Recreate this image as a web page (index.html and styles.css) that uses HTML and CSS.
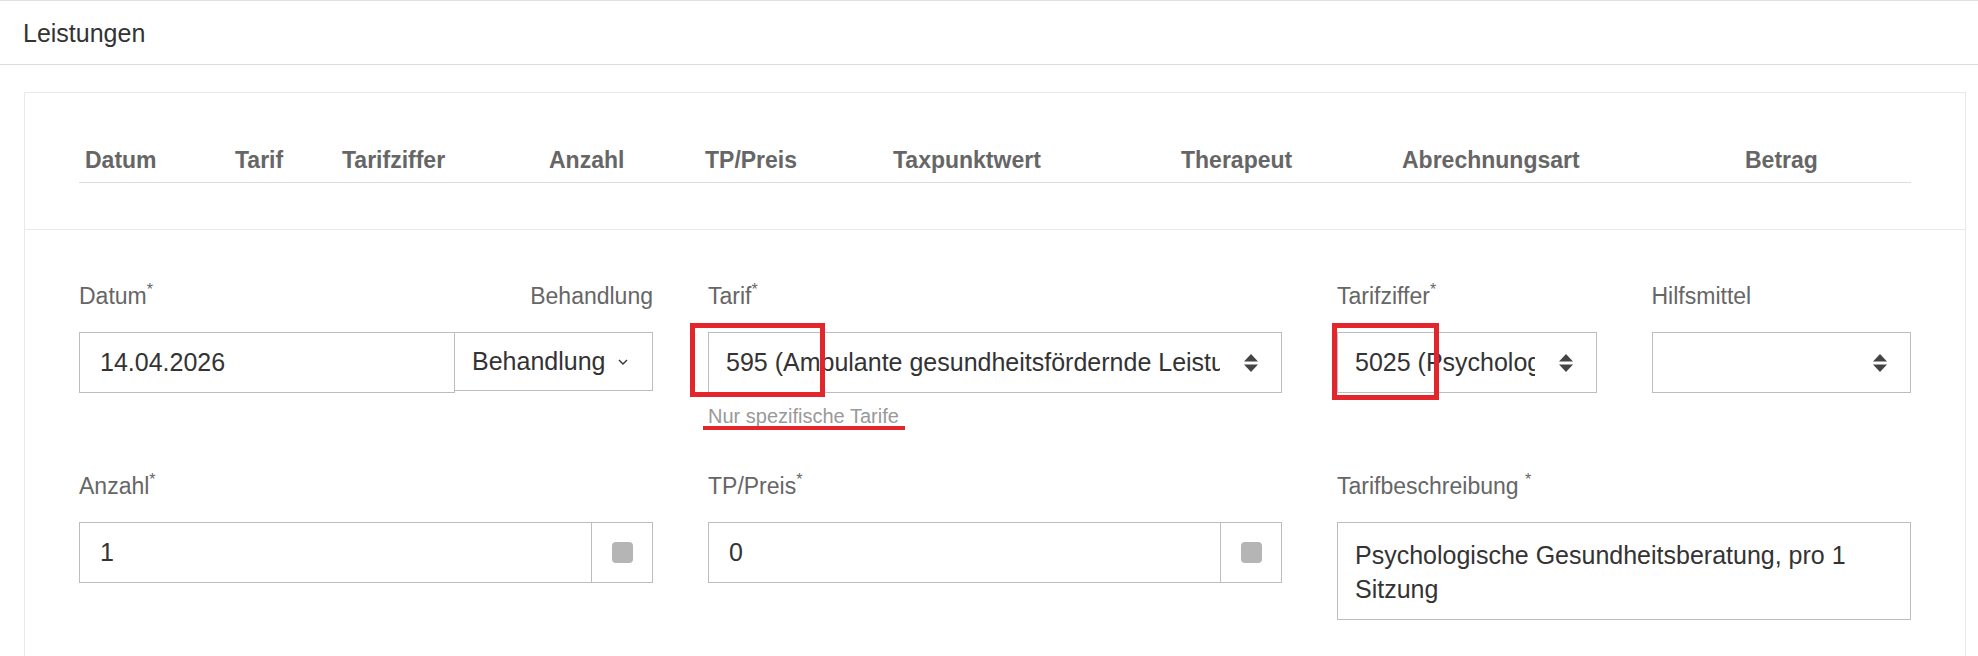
FILE: index.html
```html
<!DOCTYPE html>
<html lang="de">
<head>
  <meta charset="UTF-8" />
  <title>Leistungen</title>
  <link rel="stylesheet" href="styles.css">
</head>
<body>
  <div class="panel-heading">Leistungen</div>

  <div class="panel-body">
    <div class="card">
      <div class="list">
        <div class="table-head">
          <div class="th">Datum</div>
          <div class="th">Tarif</div>
          <div class="th">Tarifziffer</div>
          <div class="th">Anzahl</div>
          <div class="th">TP/Preis</div>
          <div class="th">Taxpunktwert</div>
          <div class="th">Therapeut</div>
          <div class="th">Abrechnungsart</div>
          <div class="th">Betrag</div>
        </div>
      </div>

      <form class="entry">
        <!-- Zeile 1 -->
        <div class="field">
          <div class="label-row">
            <label class="lbl" for="datum">Datum<sup>*</sup></label>
            <label class="lbl">Behandlung</label>
          </div>
          <div class="input-group">
            <input class="control" type="text" id="datum" value="14.04.2026" />
            <button type="button" class="dropdown">
              <span>Behandlung</span>
              <svg class="chev" viewBox="0 0 10 6" width="10" height="6"><path d="M1 1 L5 5 L9 1" fill="none" stroke="#333" stroke-width="1.4"/></svg>
            </button>
          </div>
        </div>

        <div class="field">
          <label class="lbl">Tarif<sup>*</sup></label>
          <div class="select">
            <span class="value">595 (Ambulante gesundheitsfördernde Leistungen)</span>
            <svg class="sort" viewBox="0 0 14 18" width="14" height="18"><path d="M7 0 L14 7.5 H0 Z M0 10.5 H14 L7 18 Z" fill="#444"/></svg>
            <span class="mark mark-tarif"></span>
          </div>
          <div class="hint">Nur spezifische Tarife<span class="underline"></span></div>
        </div>

        <div class="split">
          <div class="field">
            <label class="lbl">Tarifziffer<sup>*</sup></label>
            <div class="select">
              <span class="value">5025 (Psychologische Gesundheitsberatung, pro 1 Sitzung)</span>
              <svg class="sort" viewBox="0 0 14 18" width="14" height="18"><path d="M7 0 L14 7.5 H0 Z M0 10.5 H14 L7 18 Z" fill="#444"/></svg>
              <span class="mark mark-ziffer"></span>
            </div>
          </div>
          <div class="field">
            <label class="lbl">Hilfsmittel</label>
            <div class="select">
              <span class="value"></span>
              <svg class="sort" viewBox="0 0 14 18" width="14" height="18"><path d="M7 0 L14 7.5 H0 Z M0 10.5 H14 L7 18 Z" fill="#444"/></svg>
            </div>
          </div>
        </div>

        <!-- Zeile 2 -->
        <div class="field">
          <label class="lbl" for="anzahl">Anzahl<sup>*</sup></label>
          <div class="input-group">
            <input class="control flat" type="text" id="anzahl" value="1" />
            <span class="addon"><span class="check"></span></span>
          </div>
        </div>

        <div class="field">
          <label class="lbl" for="preis">TP/Preis<sup>*</sup></label>
          <div class="input-group">
            <input class="control flat" type="text" id="preis" value="0" />
            <span class="addon"><span class="check"></span></span>
          </div>
        </div>

        <div class="field">
          <label class="lbl" for="beschreibung">Tarifbeschreibung <sup>*</sup></label>
          <textarea class="control area" id="beschreibung">Psychologische Gesundheitsberatung, pro 1 Sitzung</textarea>
        </div>
      </form>
    </div>
  </div>
</body>
</html>
```

FILE: styles.css
```css
* {
  box-sizing: border-box;
}
html, body {
  overflow: hidden;
}
body {
  margin: 0;
  font-family: "Liberation Sans", Arial, sans-serif;
  color: #333;
  background-color: #fff;
}

.panel-heading {
  height: 65px;
  padding: 2px 0 0 23px;
  border-top: 1px solid #e2e2e2;
  border-bottom: 1px solid #dcdcdc;
  font-size: 25px;
  line-height: 61px;
  color: #333;
}
.panel-body {
  padding: 27px 12px 0 24px;
}
.card {
  border: 1px solid #e9e9e9;
}

.list {
  padding: 43px 54px 46px;
  border-bottom: 1px solid #e9e9e9;
}
.table-head {
  display: grid;
  grid-template-columns: 150px 107px 207px 156px 188px 288px 221px 343px 172px;
  border-bottom: 1px solid #ddd;
}
.th {
  padding: 8px 6px 5px;
  font-size: 23px;
  font-weight: bold;
  line-height: 33px;
  color: #666;
  white-space: nowrap;
}

.entry {
  display: grid;
  grid-template-columns: repeat(3, 1fr);
  column-gap: 55px;
  row-gap: 40px;
  align-items: start;
  padding: 50px 54px;
}
.split {
  display: grid;
  grid-template-columns: 1fr 1fr;
  column-gap: 55px;
}
.field {
  min-width: 0;
}
.label-row {
  display: flex;
  justify-content: space-between;
}
.lbl {
  display: block;
  margin-bottom: 19px;
  font-size: 23px;
  line-height: 33px;
  color: #666;
}
.lbl sup {
  font-size: 16px;
  line-height: 0;
  vertical-align: 9px;
}

.input-group {
  display: flex;
  align-items: flex-start;
}
.control {
  width: 100%;
  height: 61px;
  padding: 0 20px;
  border: 1px solid #bdbdbd;
  border-radius: 0;
  background: #fff;
  font-family: inherit;
  font-size: 25px;
  color: #333;
  outline: none;
}
.input-group .control {
  flex: 1;
  min-width: 0;
}
.control.flat {
  border-right: none;
}
.control.area {
  display: block;
  height: 98px;
  padding: 15px 17px;
  line-height: 34px;
  resize: none;
  overflow: hidden;
}

.dropdown {
  flex: none;
  display: flex;
  align-items: center;
  gap: 13px;
  width: 199px;
  height: 59px;
  margin-left: -1px;
  padding: 0 17px;
  border: 1px solid #bdbdbd;
  background: #fff;
  font-family: inherit;
  font-size: 25px;
  color: #333;
}
.chev {
  flex: none;
}

.addon {
  flex: none;
  display: flex;
  align-items: center;
  justify-content: center;
  width: 62px;
  height: 61px;
  border: 1px solid #bdbdbd;
}
.check {
  width: 21px;
  height: 21px;
  border-radius: 4px;
  background-color: #b5b5b5;
}

.select {
  position: relative;
  display: flex;
  align-items: center;
  gap: 24px;
  height: 61px;
  padding: 0 23px 0 17px;
  border: 1px solid #bdbdbd;
  font-size: 25px;
  color: #333;
}
.select .value {
  flex: 1;
  min-width: 0;
  overflow: hidden;
  white-space: nowrap;
}
.sort {
  flex: none;
}

.hint {
  position: relative;
  width: fit-content;
  margin-top: 9px;
  font-size: 20px;
  line-height: 28px;
  color: #999;
}

/* rote Markierungen */
.mark {
  position: absolute;
  border: 5px solid #e3262c;
}
.mark-tarif {
  left: -19px;
  top: -10px;
  width: 135px;
  height: 74px;
}
.mark-ziffer {
  left: -6px;
  top: -10px;
  width: 107px;
  height: 77px;
}
.underline {
  position: absolute;
  left: -5px;
  top: 24px;
  width: 202px;
  height: 4px;
  background-color: #e3262c;
}
```
